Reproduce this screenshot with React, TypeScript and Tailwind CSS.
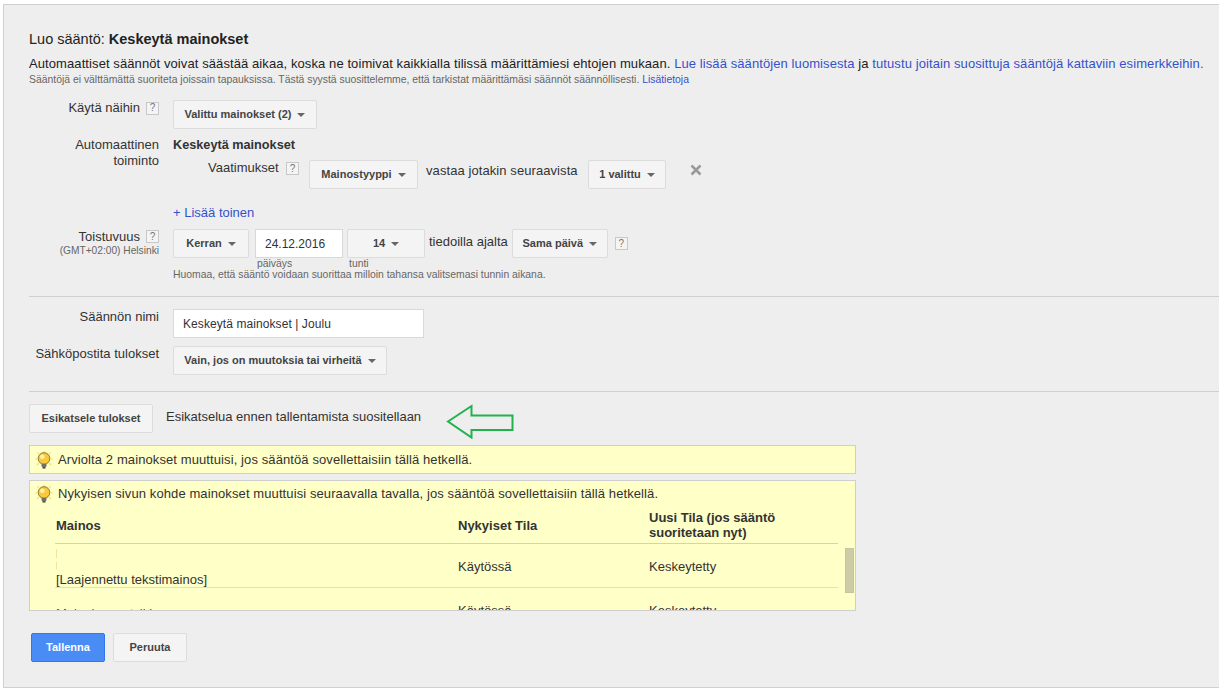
const Caret = () => (
  <span className="ml-[6px] inline-block h-0 w-0 border-x-[4px] border-t-[4px] border-x-transparent border-t-[#666] align-middle" />
);

const Help = () => (
  <span className="flex h-[13px] w-[13px] shrink-0 items-center justify-center border border-[#c8c8c8] bg-[#f4f4f4] text-[10px] leading-none text-[#777]">
    ?
  </span>
);

const DropButton = ({ label, className = "" }: { label: string; className?: string }) => (
  <button
    className={`flex h-[29px] shrink-0 items-center justify-center rounded-[2px] border border-[#dcdcdc] bg-[#f4f4f4] text-[11px] font-bold text-[#444] ${className}`}
  >
    {label}
    <Caret />
  </button>
);

const Bulb = () => (
  <svg width="18" height="18" viewBox="0 0 18 18" className="shrink-0">
    <path
      d="M9 0v1.500M2.500 1.500L4 3M15.500 1.500L14 3M0 8h2M16 8h2M2 14l2-2M16 14l-2-2"
      stroke="#efe36e"
      strokeWidth="1.200"
    />
    <circle cx="9" cy="7.500" r="5.800" fill="#f9c93c" stroke="#8f7425" strokeWidth="1" />
    <circle cx="7.300" cy="5.800" r="2.300" fill="#fff2b0" />
    <rect x="6.500" y="12.800" width="5" height="3.200" rx="1" fill="#6f7068" />
    <rect x="7.500" y="16" width="3" height="1.600" fill="#4f5049" />
  </svg>
);

const Label = ({ children, className = "" }: { children: React.ReactNode; className?: string }) => (
  <div className={`w-[130px] shrink-0 text-right text-[13px] leading-[16px] text-[#333] ${className}`}>{children}</div>
);

const App = () => {
  return (
    <div className="h-[691px] w-[1219px] overflow-hidden bg-white pl-[3px] pt-[4px] font-['Liberation_Sans',Arial,sans-serif]">
      <div className="h-[684px] border-b border-l border-t border-[#d0d0d0] bg-[#eeeeee] pl-[25px] pt-[25px]">
        <h1 className="text-[14.500px] leading-[18px] text-[#222]">
          Luo sääntö: <span className="font-bold">Keskeytä mainokset</span>
        </h1>

        <p className="mt-[8px] whitespace-nowrap text-[13px] leading-[16px] tracking-[0.09px] text-[#222]">
          Automaattiset säännöt voivat säästää aikaa, koska ne toimivat kaikkialla tilissä määrittämiesi ehtojen mukaan.{" "}
          <span className="text-[#3651cc]">Lue lisää sääntöjen luomisesta</span> ja{" "}
          <span className="text-[#3651cc]">tutustu joitain suosittuja sääntöjä kattaviin esimerkkeihin.</span>
        </p>
        <p className="mt-[1px] whitespace-nowrap text-[10.400px] leading-[14px] text-[#666]">
          Sääntöjä ei välttämättä suoriteta joissain tapauksissa. Tästä syystä suosittelemme, että tarkistat määrittämäsi säännöt säännöllisesti.{" "}
          <span className="text-[#3651cc]">Lisätietoja</span>
        </p>

        <div className="mt-[13px] flex gap-[14px]">
          <Label className="flex items-center justify-end gap-[6px] self-start">
            Käytä näihin <Help />
          </Label>
          <DropButton label="Valittu mainokset (2)" className="w-[144px]" />
        </div>

        <div className="mt-[8px] flex gap-[14px]">
          <Label>
            Automaattinen
            <br />
            toiminto
          </Label>
          <div>
            <div className="text-[12.700px] font-bold leading-[16px] text-[#333]">Keskeytä mainokset</div>
            <div className="mt-[7px] flex items-start">
              <span className="ml-[35px] w-[70px] text-[13px] leading-[16px] text-[#333]">Vaatimukset</span>
              <span className="ml-[8px] mt-[2px] block"><Help /></span>
              <DropButton label="Mainostyyppi" className="ml-[10px] w-[109px]" />
              <span className="ml-[8px] mt-[3px] w-[152px] whitespace-nowrap text-[13px] leading-[16px] tracking-[0.08px] text-[#333]">vastaa jotakin seuraavista</span>
              <DropButton label="1 valittu" className="ml-[10px] w-[78px]" />
              <svg width="12" height="12" viewBox="0 0 12 12" className="ml-[24px] mt-[4px]">
                <path d="M1.500 1.500l9 9M10.500 1.500l-9 9" stroke="#999" strokeWidth="2.500" />
              </svg>
            </div>
          </div>
        </div>

        <div className="ml-[144px] mt-[16px] text-[13px] leading-[16px] text-[#3651cc]">+ Lisää toinen</div>

        <div className="mt-[8px] flex gap-[14px]">
          <div className="w-[130px] shrink-0 text-right">
            <div className="flex items-center justify-end gap-[6px] text-[13px] leading-[15px] text-[#333]">
              Toistuvuus <Help />
            </div>
            <div className="text-[10.200px] leading-[13px] text-[#666]">(GMT+02:00) Helsinki</div>
          </div>
          <div>
            <div className="flex items-start">
              <DropButton label="Kerran" className="w-[76px]" />
              <div className="ml-[6px] flex h-[29px] w-[88px] items-center border border-[#d9d9d9] bg-white pl-[9px] text-[12px] text-[#333]">
                24.12.2016
              </div>
              <DropButton label="14" className="ml-[4px] w-[78px]" />
              <span className="ml-[4px] mt-[5px] whitespace-nowrap text-[13px] leading-[16px] text-[#333]">tiedoilla ajalta</span>
              <DropButton label="Sama päivä" className="ml-[4px] w-[96px]" />
              <span className="ml-[7px] mt-[8px] block"><Help /></span>
            </div>
            <div className="flex text-[10.400px] leading-[11px] text-[#666]">
              <span className="ml-[84px] w-[92px]">päiväys</span>
              <span>tunti</span>
            </div>
            <div className="text-[10.400px] leading-[11px] text-[#666]">
              Huomaa, että sääntö voidaan suorittaa milloin tahansa valitsemasi tunnin aikana.
            </div>
          </div>
        </div>

        <hr className="mt-[16px] border-t border-[#cfcfcf]" />

        <div className="mt-[12px] flex gap-[14px]">
          <Label>Säännön nimi</Label>
          <div className="flex h-[29px] w-[251px] items-center border border-[#d9d9d9] bg-white pl-[9px] text-[12px] tracking-[0.08px] text-[#333]">
            Keskeytä mainokset | Joulu
          </div>
        </div>

        <div className="mt-[8px] flex gap-[14px]">
          <Label>Sähköpostita tulokset</Label>
          <DropButton label="Vain, jos on muutoksia tai virheitä" className="w-[214px]" />
        </div>

        <hr className="mt-[16px] border-t border-[#cfcfcf]" />

        <div className="mt-[12px] flex items-start">
          <button className="flex h-[29px] w-[124px] items-center justify-center rounded-[2px] border border-[#dcdcdc] bg-[#f4f4f4] text-[11px] font-bold text-[#444]">
            Esikatsele tulokset
          </button>
          <span className="ml-[13px] mt-[5px] w-[258px] whitespace-nowrap text-[13px] leading-[16px] text-[#333]">Esikatselua ennen tallentamista suositellaan</span>
          <svg width="69" height="35" viewBox="0 0 69 35" className="ml-[22px]">
            <path d="M2 17.500L25.500 2v9.500H66.500v14.500H25.500v7.500z" fill="none" stroke="#22b14c" strokeWidth="2" />
          </svg>
        </div>

        <div className="mt-[6px] flex h-[29px] w-[827px] items-center gap-[5px] border border-[#cfcfcf] bg-[#ffffc8] pl-[5px] text-[13px] tracking-[0.1px] text-[#333]">
          <Bulb />
          Arviolta 2 mainokset muuttuisi, jos sääntöä sovellettaisiin tällä hetkellä.
        </div>

        <div className="relative mt-[6px] h-[131px] w-[827px] overflow-hidden border border-[#cfcfcf] bg-[#ffffc8] text-[13px] text-[#333]">
          <div className="flex h-[26px] items-center gap-[5px] pl-[5px] tracking-[0.1px]">
            <Bulb />
            Nykyisen sivun kohde mainokset muuttuisi seuraavalla tavalla, jos sääntöä sovellettaisiin tällä hetkellä.
          </div>

          <div className="ml-[25px] w-[783px]">
            <div className="grid h-[37px] grid-cols-[402px_191px_1fr] items-center border-b border-[#cfcfd4] pl-[1px] font-bold leading-[15px]">
              <span>Mainos</span>
              <span>Nykyiset Tila</span>
              <span>Uusi Tila (jos sääntö
                <br />
                suoritetaan nyt)
              </span>
            </div>
            <div className="grid h-[44px] grid-cols-[402px_191px_1fr] border-b border-[#dcdcdc] pl-[1px] leading-[15px]">
              <div className="flex flex-col justify-end">
                <span className="mb-[4px] h-[9px] w-px bg-[#f5e49a]" />
                <span className="mb-[3px] h-[7px] w-px bg-[#f5e49a]" />
                <span>[Laajennettu tekstimainos]</span>
              </div>
              <span className="pt-[15px]">Käytössä</span>
              <span className="pt-[15px]">Keskeytetty</span>
            </div>
            <div className="grid h-[44px] grid-cols-[402px_191px_1fr] pl-[1px] leading-[15px]">
              <span className="pt-[18px] text-[#555]">Mainoksen otsikko -</span>
              <span className="pt-[15px]">Käytössä</span>
              <span className="pt-[15px]">Keskeytetty</span>
            </div>
          </div>

          <div className="absolute right-[1px] top-[67px] h-[45px] w-[9px] border border-[#c5c5a0] bg-[#cccca6]" />
        </div>

        <div className="ml-[2px] mt-[22px] flex gap-[8px]">
          <button className="h-[29px] w-[74px] rounded-[2px] border border-[#3079ed] bg-[#4a8cf6] text-[11px] font-bold text-white">
            Tallenna
          </button>
          <button className="h-[29px] w-[74px] rounded-[2px] border border-[#dcdcdc] bg-[#f4f4f4] text-[11px] font-bold text-[#444]">
            Peruuta
          </button>
        </div>
      </div>
    </div>
  );
};

export default App;
